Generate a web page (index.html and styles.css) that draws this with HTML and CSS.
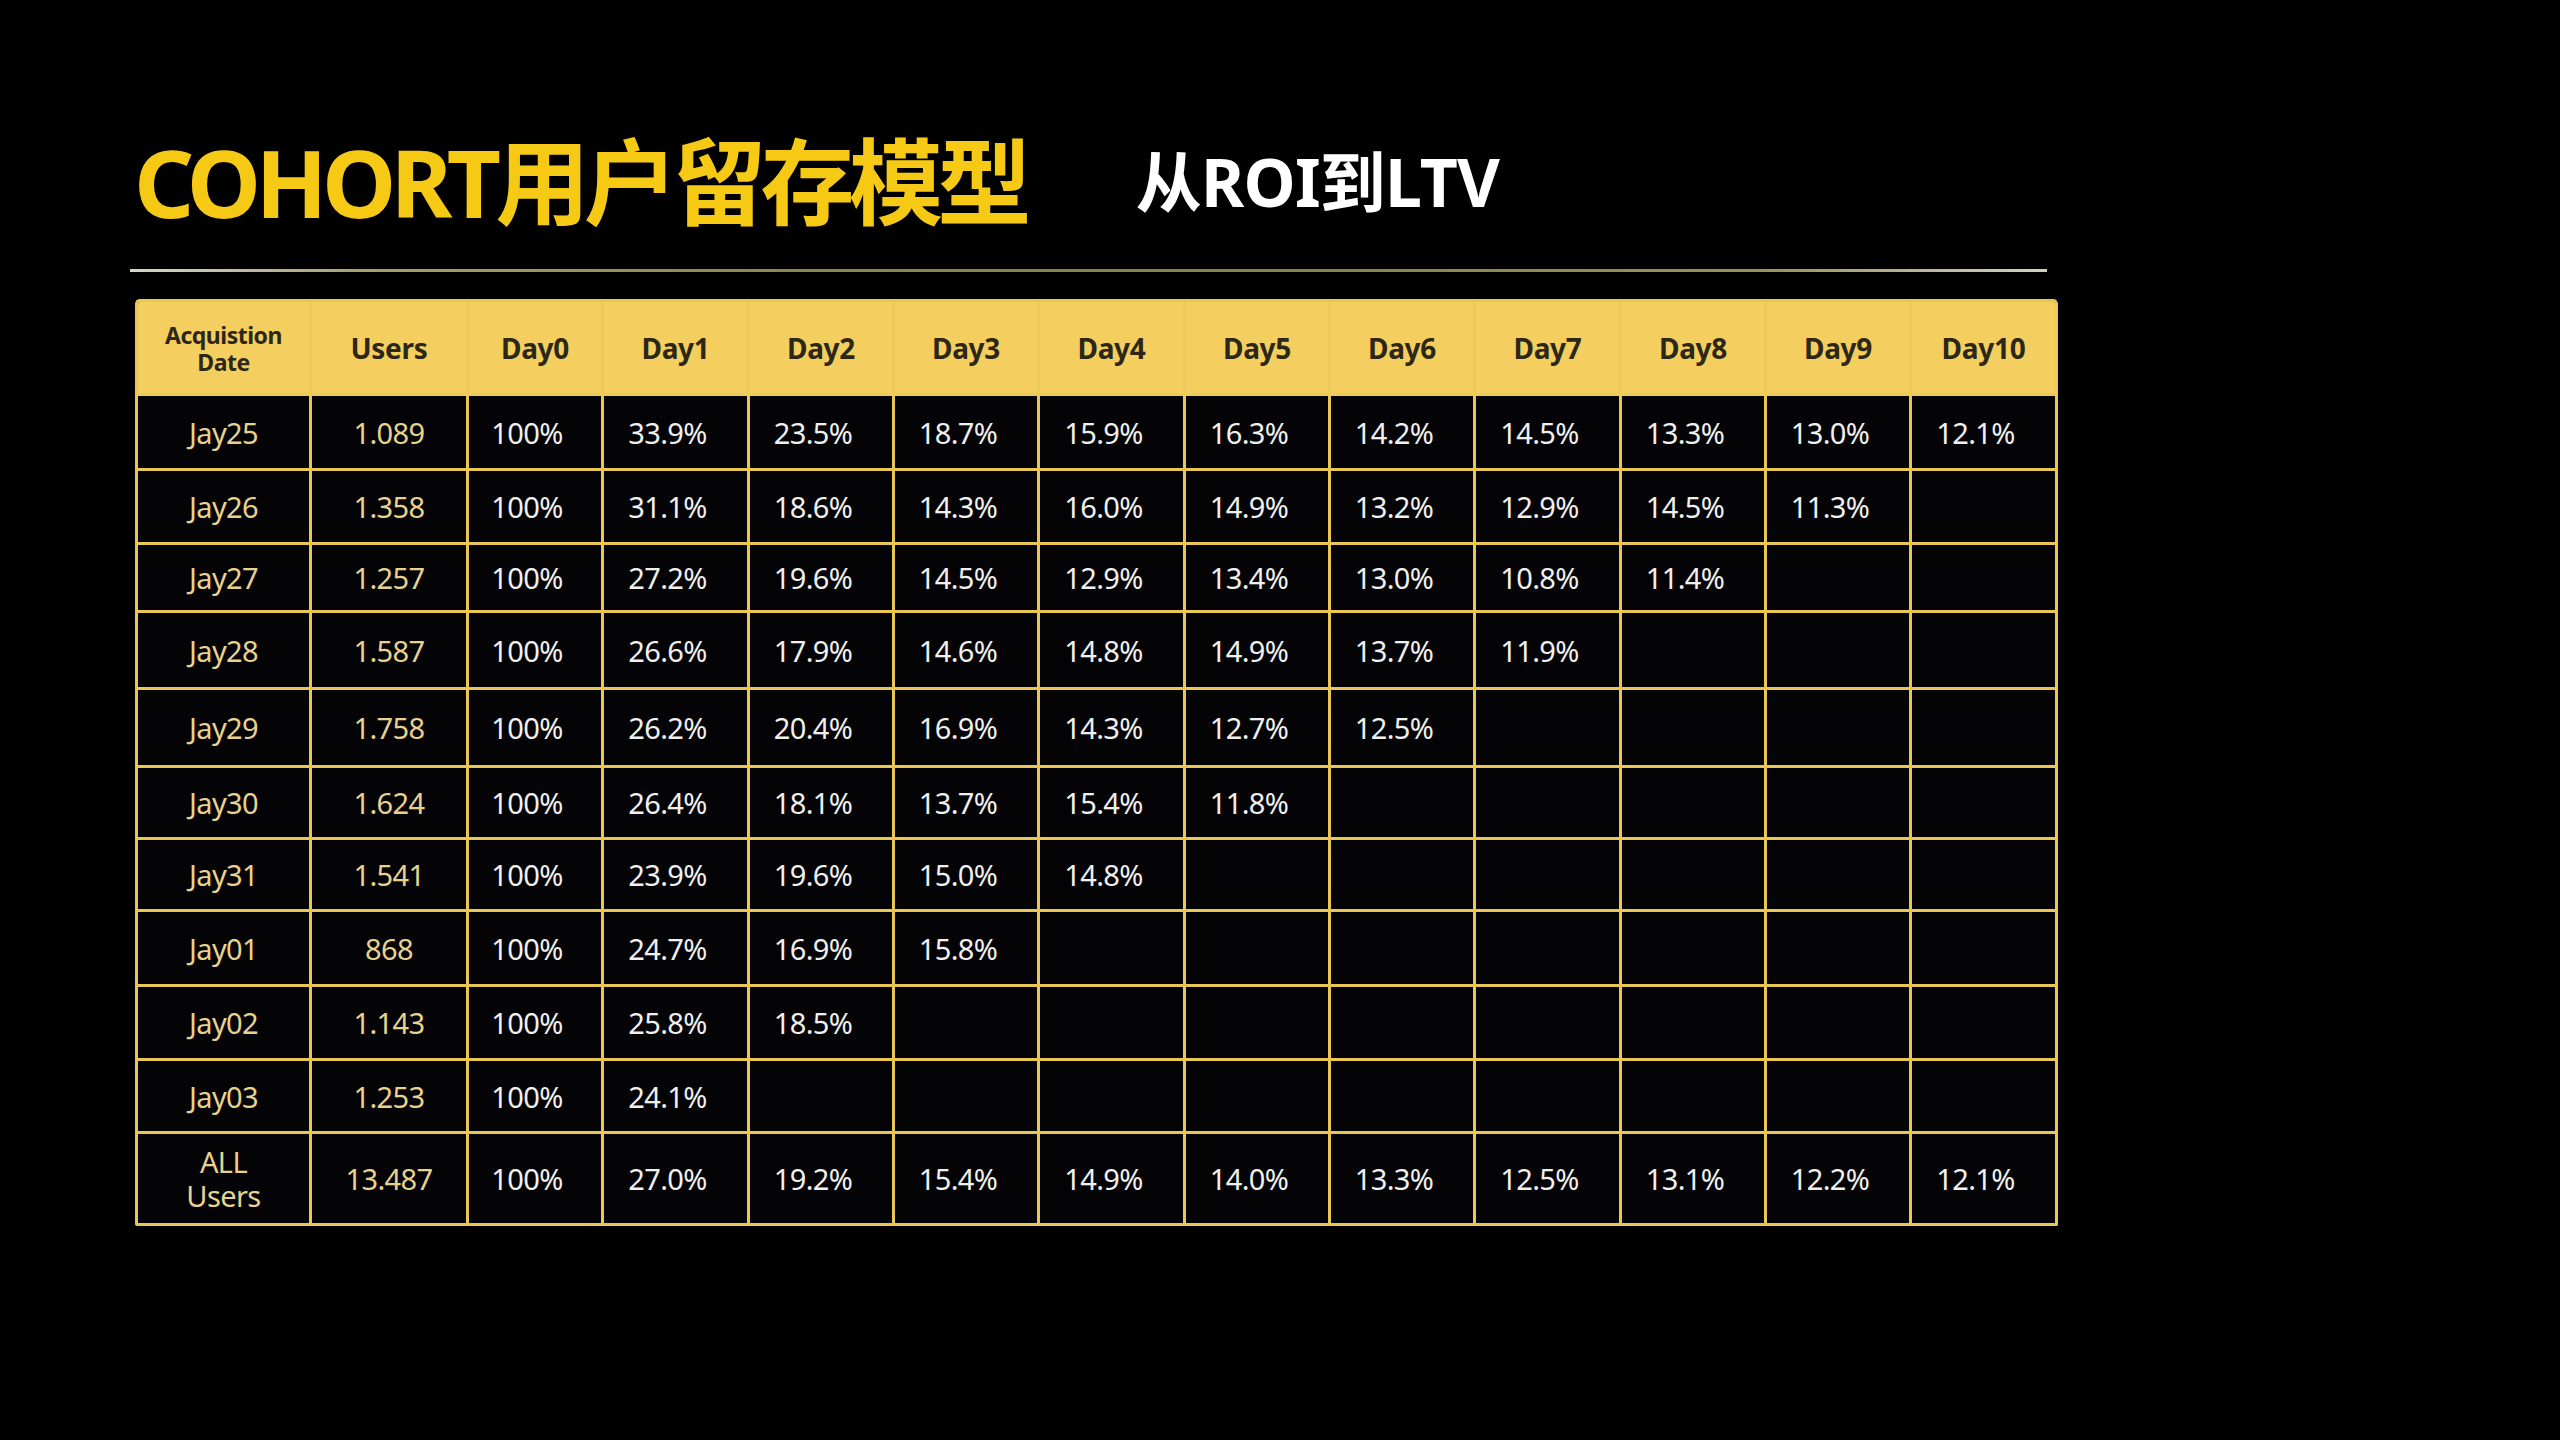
FILE: index.html
```html
<!DOCTYPE html>
<html lang="zh-CN">
<head>
<meta charset="utf-8">
<title>COHORT用户留存模型</title>
<link rel="stylesheet" href="styles.css">
</head>
<body>
<div class="slide">
  <header class="title-bar">
    <h1 class="title">COHORT用户留存模型</h1>
    <h2 class="subtitle">从ROI到LTV</h2>
  </header>
  <div class="rule"></div>
  <div class="cohort" role="table">
    <div class="hc hc-small">Acquistion<br>Date</div>
    <div class="hc">Users</div>
    <div class="hc">Day0</div>
    <div class="hc">Day1</div>
    <div class="hc">Day2</div>
    <div class="hc">Day3</div>
    <div class="hc">Day4</div>
    <div class="hc">Day5</div>
    <div class="hc">Day6</div>
    <div class="hc">Day7</div>
    <div class="hc">Day8</div>
    <div class="hc">Day9</div>
    <div class="hc">Day10</div>

    <div class="c gold">Jay25</div><div class="c gold">1.089</div><div class="c pct">100%</div><div class="c pct">33.9%</div><div class="c pct">23.5%</div><div class="c pct">18.7%</div><div class="c pct">15.9%</div><div class="c pct">16.3%</div><div class="c pct">14.2%</div><div class="c pct">14.5%</div><div class="c pct">13.3%</div><div class="c pct">13.0%</div><div class="c pct">12.1%</div>

    <div class="c gold">Jay26</div><div class="c gold">1.358</div><div class="c pct">100%</div><div class="c pct">31.1%</div><div class="c pct">18.6%</div><div class="c pct">14.3%</div><div class="c pct">16.0%</div><div class="c pct">14.9%</div><div class="c pct">13.2%</div><div class="c pct">12.9%</div><div class="c pct">14.5%</div><div class="c pct">11.3%</div><div class="c pct"></div>

    <div class="c gold">Jay27</div><div class="c gold">1.257</div><div class="c pct">100%</div><div class="c pct">27.2%</div><div class="c pct">19.6%</div><div class="c pct">14.5%</div><div class="c pct">12.9%</div><div class="c pct">13.4%</div><div class="c pct">13.0%</div><div class="c pct">10.8%</div><div class="c pct">11.4%</div><div class="c pct"></div><div class="c pct"></div>

    <div class="c gold">Jay28</div><div class="c gold">1.587</div><div class="c pct">100%</div><div class="c pct">26.6%</div><div class="c pct">17.9%</div><div class="c pct">14.6%</div><div class="c pct">14.8%</div><div class="c pct">14.9%</div><div class="c pct">13.7%</div><div class="c pct">11.9%</div><div class="c pct"></div><div class="c pct"></div><div class="c pct"></div>

    <div class="c gold">Jay29</div><div class="c gold">1.758</div><div class="c pct">100%</div><div class="c pct">26.2%</div><div class="c pct">20.4%</div><div class="c pct">16.9%</div><div class="c pct">14.3%</div><div class="c pct">12.7%</div><div class="c pct">12.5%</div><div class="c pct"></div><div class="c pct"></div><div class="c pct"></div><div class="c pct"></div>

    <div class="c gold">Jay30</div><div class="c gold">1.624</div><div class="c pct">100%</div><div class="c pct">26.4%</div><div class="c pct">18.1%</div><div class="c pct">13.7%</div><div class="c pct">15.4%</div><div class="c pct">11.8%</div><div class="c pct"></div><div class="c pct"></div><div class="c pct"></div><div class="c pct"></div><div class="c pct"></div>

    <div class="c gold">Jay31</div><div class="c gold">1.541</div><div class="c pct">100%</div><div class="c pct">23.9%</div><div class="c pct">19.6%</div><div class="c pct">15.0%</div><div class="c pct">14.8%</div><div class="c pct"></div><div class="c pct"></div><div class="c pct"></div><div class="c pct"></div><div class="c pct"></div><div class="c pct"></div>

    <div class="c gold">Jay01</div><div class="c gold">868</div><div class="c pct">100%</div><div class="c pct">24.7%</div><div class="c pct">16.9%</div><div class="c pct">15.8%</div><div class="c pct"></div><div class="c pct"></div><div class="c pct"></div><div class="c pct"></div><div class="c pct"></div><div class="c pct"></div><div class="c pct"></div>

    <div class="c gold">Jay02</div><div class="c gold">1.143</div><div class="c pct">100%</div><div class="c pct">25.8%</div><div class="c pct">18.5%</div><div class="c pct"></div><div class="c pct"></div><div class="c pct"></div><div class="c pct"></div><div class="c pct"></div><div class="c pct"></div><div class="c pct"></div><div class="c pct"></div>

    <div class="c gold">Jay03</div><div class="c gold">1.253</div><div class="c pct">100%</div><div class="c pct">24.1%</div><div class="c pct"></div><div class="c pct"></div><div class="c pct"></div><div class="c pct"></div><div class="c pct"></div><div class="c pct"></div><div class="c pct"></div><div class="c pct"></div><div class="c pct"></div>

    <div class="c gold two-line">ALL<br>Users</div><div class="c gold">13.487</div><div class="c pct">100%</div><div class="c pct">27.0%</div><div class="c pct">19.2%</div><div class="c pct">15.4%</div><div class="c pct">14.9%</div><div class="c pct">14.0%</div><div class="c pct">13.3%</div><div class="c pct">12.5%</div><div class="c pct">13.1%</div><div class="c pct">12.2%</div><div class="c pct">12.1%</div>
  </div>
</div>
</body>
</html>
```

FILE: styles.css
```css
html, body {
  margin: 0;
  padding: 0;
  background: #000;
}

body {
  width: 2560px;
  height: 1440px;
  overflow: hidden;
  font-family: "Noto Sans", "Noto Sans CJK SC", sans-serif;
}

.slide {
  padding: 135px 0 0 130px;
}

.title-bar {
  display: flex;
  align-items: flex-start;
  height: 94px;
  padding-left: 4px;
}

.title {
  margin: 0;
  font-size: 94px;
  line-height: 94px;
  font-weight: 700;
  letter-spacing: -5.6px;
  color: #f6c915;
  white-space: nowrap;
}

.subtitle {
  margin: 13px 0 0 110px;
  font-size: 66px;
  line-height: 66px;
  font-weight: 700;
  letter-spacing: -0.8px;
  color: #ffffff;
  white-space: nowrap;
}

.rule {
  margin-top: 40px;
  width: 1917px;
  height: 3px;
  background: linear-gradient(90deg, #d6d6c6 0%, #a4a072 12%, #8a8650 35%, #868348 60%, #96925a 85%, #d2d2c2 100%);
}

.cohort {
  margin: 27px 0 0 5px;
  display: grid;
  width: 1923px;
  box-sizing: border-box;
  grid-template-columns: 174px 157px 135px 146px 145px 145px 146px 145px 145px 146px 145px 145px 146px;
  grid-template-rows: 94px 75px 74px 68px 77px 78px 72px 72px 75px 74px 73px 92px;
  border-top: 3px solid #eac652;
  border-left: 3px solid #eac652;
  border-radius: 5px 5px 2px 2px;
  overflow: hidden;
  background: #040406;
}

.hc, .c {
  box-sizing: border-box;
  border-right: 3px solid #eac652;
  border-bottom: 3px solid #eac652;
  display: flex;
  align-items: center;
  justify-content: center;
  text-align: center;
}

.hc {
  background: #f4cf5f;
  border-color: #f0ca58;
  color: #2c2717;
  font-size: 28px;
  font-weight: 700;
  letter-spacing: -0.3px;
}

.hc-small {
  font-size: 23px;
  line-height: 27px;
  padding-top: 2px;
  letter-spacing: -0.5px;
}

.c {
  font-size: 29px;
  font-weight: 400;
  color: #f0f0ee;
  letter-spacing: -0.6px;
}

.gold {
  color: #e8d28e;
}

.pct {
  padding-right: 16px;
}

.two-line {
  line-height: 34px;
}
```
